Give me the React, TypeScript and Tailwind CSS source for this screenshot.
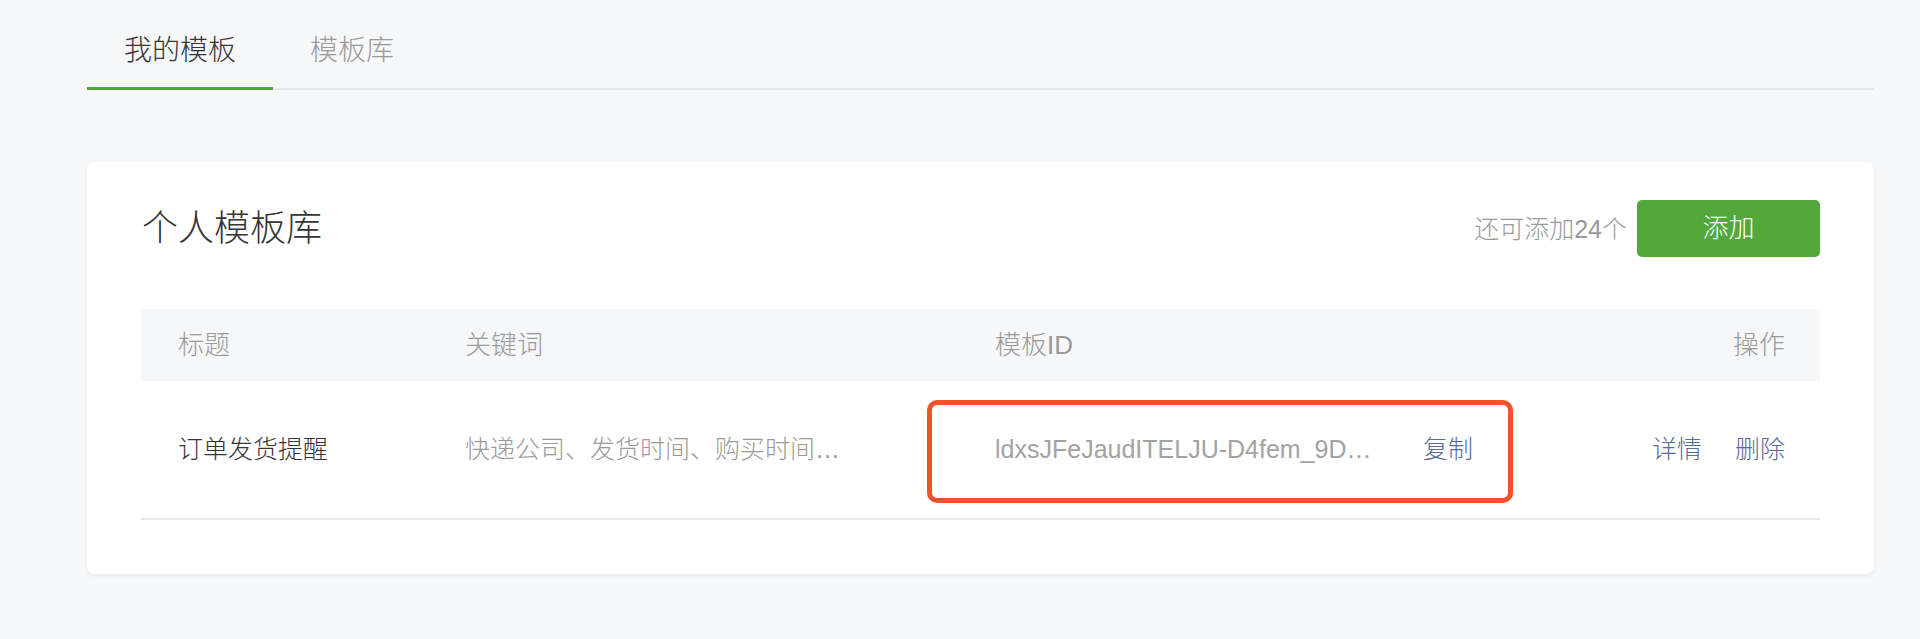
const font = "font-['Liberation_Sans','Noto_Sans_CJK_SC',sans-serif]";

const rows = [
  {
    title: "订单发货提醒",
    keywords: "快递公司、发货时间、购买时间…",
    id: "ldxsJFeJaudITELJU-D4fem_9D…",
  },
];

export default function App() {
  return (
    <div className={`min-h-[639px] bg-[#f6f7f9] pl-[87px] pr-[46px] font-light ${font}`}>
      {/* tabs */}
      <div className="flex border-b-2 border-[#e6e8eb] pt-[33px]">
        <div className="relative px-[37px] pb-[19px] text-[28px] leading-[36px] text-[#353535]">
          我的模板
          <span className="absolute -bottom-[2px] left-0 right-0 h-[3px] bg-[#4fa93a]" />
        </div>
        <div className="px-[37px] pb-[19px] text-[28px] leading-[36px] text-[#9a9a9a]">模板库</div>
      </div>

      {/* card */}
      <div className="mt-[72px] rounded-[8px] bg-white px-[54px] pb-[54px] pt-[38px] shadow-[0_2px_4px_rgba(0,0,0,0.05)]">
        <div className="flex h-[57px] items-center justify-between">
          <h2 className="pl-[1px] text-[36px] leading-[36px] text-[#353535]">个人模板库</h2>
          <div className="flex items-center gap-[10px]">
            <span className="text-[25px] leading-[30px] text-[#9a9a9a]">还可添加24个</span>
            <button className="flex h-[57px] w-[183px] items-center justify-center rounded-[5px] bg-[#52a83a] text-[26px] text-white">
              添加
            </button>
          </div>
        </div>

        <div className="mt-[52px]">
          <div className="flex h-[72px] items-center bg-[#f6f7f9] text-[26px] text-[#9a9a9a]">
            <div className="w-[287px] pl-[37px]">标题</div>
            <div className="w-[530px] pl-[37px]">关键词</div>
            <div className="flex-1 pl-[37px]">模板ID</div>
            <div className="pr-[35px] text-right">操作</div>
          </div>

          {rows.map((row) => (
            <div key={row.id} className="relative flex h-[139px] items-center border-b-2 border-[#e7e7eb] text-[25px]">
              <div className="w-[287px] pl-[37px] text-[#353535]">{row.title}</div>
              <div className="w-[530px] whitespace-nowrap pl-[37px] text-[#9a9a9a]">{row.keywords}</div>
              <div className="flex flex-1 items-center pl-[37px]">
                <span className="w-[428px] whitespace-nowrap text-[#a3a3a3]">{row.id}</span>
                <a className="text-[#576b95]">复制</a>
              </div>
              <div className="flex gap-[33px] pr-[35px] text-[#576b95]">
                <a>详情</a>
                <a>删除</a>
              </div>
              {/* highlight box */}
              <div className="pointer-events-none absolute left-[786px] top-[19px] h-[103px] w-[586px] rounded-[10px] border-[5px] border-[#f0532b]" />
            </div>
          ))}
        </div>
      </div>
    </div>
  );
}
